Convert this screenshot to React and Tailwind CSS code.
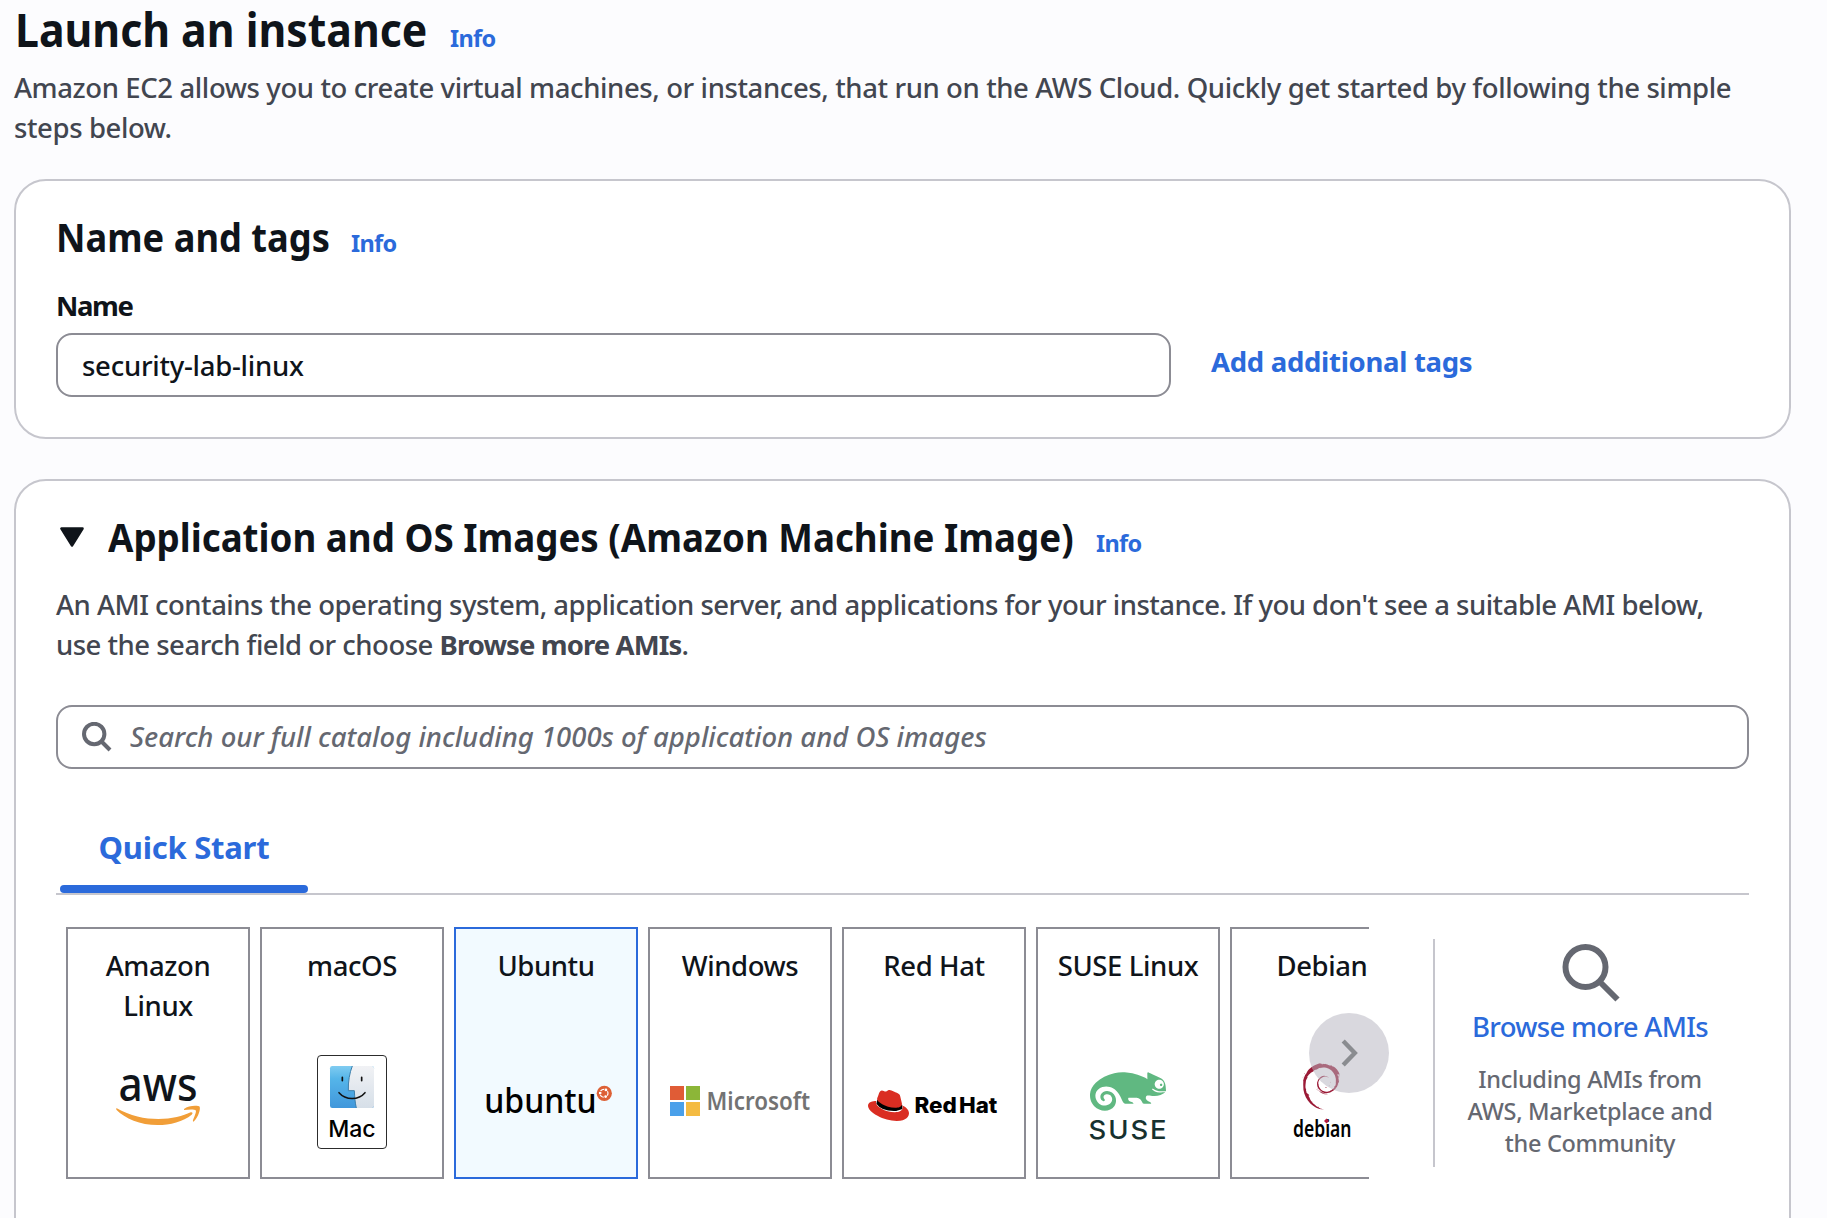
import { SiDebian, SiRedhat, SiSuse } from "react-icons/si";
import { FaUbuntu } from "react-icons/fa6";

const NOTO = "Noto Sans, sans-serif";

function Info() {
  return (
    <a className="text-[23.5px] font-bold tracking-[-0.7px] text-[#2b6adb]">Info</a>
  );
}

function AwsLogo() {
  return (
    <svg viewBox="68 1040 180 120" className="h-[120px] w-[180px]">
      <text x="118.5" y="1101" fontFamily={NOTO} fontWeight="500" fontSize="47.5" fill="#0f141a" textLength="79" lengthAdjust="spacingAndGlyphs">aws</text>
      <g transform="translate(50 900) scale(0.33333)" fill="#f19e38">
        <path d="M199 624C240 648 285 657 325 657C365 657 400 648 422 637C427 635 430 640 425 644C400 665 360 675 323 675C270 675 225 655 199 629Z" />
        <path d="M402 627C415 615 446 616 449 620C452 628 445 650 432 664C428 667 428 662 430 658C434 648 440 635 437 631C434 627 415 628 402 630Z" />
      </g>
    </svg>
  );
}

function MacLogo() {
  return (
    <svg viewBox="262 1040 180 120" className="h-[120px] w-[180px]">
      <defs>
        <linearGradient id="finderBlue" x1="0" y1="0" x2="0" y2="1">
          <stop offset="0" stopColor="#80ccf1" />
          <stop offset="0.3" stopColor="#55b5e9" />
          <stop offset="1" stopColor="#4197db" />
        </linearGradient>
        <linearGradient id="finderWhite" x1="0" y1="0" x2="0" y2="1">
          <stop offset="0" stopColor="#f1f2f5" />
          <stop offset="1" stopColor="#d6dfe8" />
        </linearGradient>
      </defs>
      <rect x="317.5" y="1055.5" width="69" height="93" rx="3.5" fill="#fff" stroke="#2c2c2c" strokeWidth="1" />
      <g transform="translate(300 1040) scale(0.33333)">
        <rect x="90" y="78" width="132" height="126" rx="7" fill="url(#finderBlue)" />
        <path d="M157 78H215Q222 78 222 85V197Q222 204 215 204H169C165 188 164 170 163 152H145C144 125 149 98 157 78Z" fill="url(#finderWhite)" />
        <path d="M157 78C149 98 144 125 145 152H163C164 170 165 188 169 204" fill="none" stroke="#3a7dab" strokeWidth="3" />
        <path d="M127 112V122M185 112V122" stroke="#111" strokeWidth="5" strokeLinecap="round" />
        <path d="M117 158C137 181 176 181 195 158" fill="none" stroke="#111" strokeWidth="4.5" strokeLinecap="round" />
      </g>
      <text x="328.2" y="1137.2" fontFamily="Inter, sans-serif" fontWeight="500" fontSize="22.8" fill="#000" textLength="47.5" lengthAdjust="spacingAndGlyphs">Mac</text>
    </svg>
  );
}

function UbuntuLogo() {
  return (
    <svg viewBox="456 1040 180 120" className="h-[120px] w-[180px]">
      <text x="484.2" y="1113" fontFamily={NOTO} fontWeight="500" fontSize="34.5" fill="#000" textLength="112.5" lengthAdjust="spacingAndGlyphs">ubuntu</text>
      <circle cx="604.3" cy="1093.3" r="7.6" fill="#dd6035" />
      <FaUbuntu x="598.7" y="1088" size={10.6} color="#fff" />
    </svg>
  );
}

function MicrosoftLogo() {
  return (
    <svg viewBox="650 1040 180 120" className="h-[120px] w-[180px]">
      <rect x="670" y="1086" width="14" height="14" fill="#e05c36" />
      <rect x="686" y="1086" width="14" height="14" fill="#8cb638" />
      <rect x="670" y="1102" width="14" height="14" fill="#4aa0ea" />
      <rect x="686" y="1102" width="14" height="14" fill="#f4bb42" />
      <text x="706.6" y="1109.8" fontFamily={NOTO} fontWeight="600" fontSize="24.3" fill="#737373" textLength="103.5" lengthAdjust="spacingAndGlyphs">Microsoft</text>
    </svg>
  );
}

function RedHatLogo() {
  return (
    <svg viewBox="844 1040 180 120" className="h-[120px] w-[180px]">
      <path transform="translate(868 1085) scale(1.7083)" d="M5.4 8.6L4.9 11Q8 15.6 16.5 15.2L20.2 14L20 11.6L12 11Z" fill="#000" />
      <SiRedhat x="868" y="1085" size={41} color="#da2d22" />
      <g fontFamily="Inter, sans-serif" fontWeight="800" fontSize="21.6" fill="#000">
        <text x="914.4" y="1112.6" textLength="42.4" lengthAdjust="spacingAndGlyphs">Red</text>
        <text x="959" y="1112.6" textLength="38.4" lengthAdjust="spacingAndGlyphs">Hat</text>
      </g>
    </svg>
  );
}

function SuseLogo() {
  return (
    <svg viewBox="1038 1040 180 120" className="h-[120px] w-[180px]">
      <SiSuse x="1090" y="1053.5" size={76} color="#60b881" />
      <text x="1088.5" y="1138.5" fontFamily="Inter, sans-serif" fontWeight="500" fontSize="25.5" letterSpacing="1.8" fill="#17312f" textLength="80" lengthAdjust="spacingAndGlyphs">SUSE</text>
    </svg>
  );
}

function DebianLogo() {
  return (
    <svg viewBox="1232 1040 180 120" className="h-[120px] w-[180px]">
      <SiDebian x="1298.3" y="1063" size={46.5} color="#9b1a36" />
      <text x="1293" y="1137" fontFamily={NOTO} fontWeight="600" fontSize="23" fill="#000" textLength="58.5" lengthAdjust="spacingAndGlyphs">debian</text>
      <path d="M1326.5 1118.4L1329 1120.9L1326.5 1123.4L1324 1120.9Z" fill="#b3193c" />
    </svg>
  );
}

const TILES = [
  { label: "Amazon Linux", Logo: AwsLogo },
  { label: "macOS", Logo: MacLogo },
  { label: "Ubuntu", Logo: UbuntuLogo, selected: true },
  { label: "Windows", Logo: MicrosoftLogo },
  { label: "Red Hat", Logo: RedHatLogo },
  { label: "SUSE Linux", Logo: SuseLogo },
  { label: "Debian", Logo: DebianLogo },
];

function Tile({ label, Logo, selected }) {
  return (
    <div
      className={
        "flex h-[252px] w-[184px] shrink-0 flex-col items-center border-2 pt-[17px] " +
        (selected ? "border-[#2b6adb] bg-[#f2faff]" : "border-[#8c8c94] bg-white")
      }
    >
      <div className="h-20 w-[150px] text-center text-[27.5px] leading-10 tracking-[-0.4px]">{label}</div>
      <div className="mt-[14px]">
        <Logo />
      </div>
    </div>
  );
}

export default function App() {
  return (
    <div className="flex h-[1218px] w-[1827px] flex-col overflow-hidden bg-[#fcfcfe] pr-9 pl-[14px] font-['Noto_Sans',sans-serif] font-medium text-[#0f141a]">
      <header className="flex h-[58px] shrink-0 items-baseline leading-[58px]">
        <h1 className="ml-px w-[435px] text-[47px] font-bold whitespace-nowrap">
          <span className="inline-block origin-left scale-x-[0.91]">Launch an instance</span>
        </h1>
        <Info />
      </header>
      <p className="mt-[10px] text-[27.5px] leading-10 tracking-[-0.39px] whitespace-nowrap text-[#424650]">
        Amazon EC2 allows you to create virtual machines, or instances, that run on the AWS Cloud. Quickly get started by following the simple
        <br />
        steps below.
      </p>

      <section className="mt-[31px] h-[260px] shrink-0 rounded-[32px] border-2 border-[#c6c6cd] bg-white px-10 pt-8">
        <div className="flex h-12 items-baseline leading-[48px]">
          <h2 className="w-[295px] text-[39px] font-bold whitespace-nowrap">
            <span className="inline-block origin-left scale-x-[0.93]">Name and tags</span>
          </h2>
          <Info />
        </div>
        <label className="mt-[25px] block h-[39px] text-[27.5px] leading-10 font-bold tracking-[-1.4px]">Name</label>
        <div className="mt-2 flex items-start">
          <div className="h-16 w-[1115px] rounded-2xl border-2 border-[#8c8c94] pl-6 text-[27.5px] leading-[62px] tracking-[-0.25px]">
            security-lab-linux
          </div>
          <a className="ml-10 text-[27.5px] leading-[58px] font-bold tracking-[-0.3px] text-[#2b6adb]">Add additional tags</a>
        </div>
      </section>

      <section className="mt-10 h-[900px] shrink-0 rounded-[32px] border-2 border-[#c6c6cd] bg-white px-10 pt-8">
        <div className="flex h-12 items-baseline leading-[48px]">
          <svg viewBox="0 0 26 20" className="ml-[3px] h-5 w-[26px] -translate-y-[5px]">
            <path d="M2.4 1.5H23.6L13 18.5Z" fill="#0f141a" stroke="#0f141a" strokeWidth="2.4" strokeLinejoin="round" />
          </svg>
          <h2 className="ml-[23px] w-[988px] text-[39px] font-bold whitespace-nowrap">
            <span className="inline-block origin-left scale-x-[0.941]">Application and OS Images (Amazon Machine Image)</span>
          </h2>
          <Info />
        </div>
        <p className="mt-6 text-[27.5px] leading-10 tracking-[-0.5px] whitespace-nowrap text-[#424650]">
          An AMI contains the operating system, application server, and applications for your instance. If you don't see a suitable AMI below,
          <br />
          use the search field or choose <b className="tracking-[-0.9px]">Browse more AMIs</b>.
        </p>
        <div className="mt-10 flex h-16 items-center rounded-2xl border-2 border-[#8c8c94] pl-6">
          <svg viewBox="0 0 30 30" className="h-[30px] w-[30px]">
            <circle cx="12.2" cy="12" r="10.2" fill="none" stroke="#656871" strokeWidth="4" />
            <path d="M19.5 19.5L28 28" stroke="#656871" strokeWidth="4" />
          </svg>
          <span className="ml-[18px] text-[27.5px] leading-[60px] whitespace-nowrap text-[#656871] italic">
            Search our full catalog including 1000s of application and OS images
          </span>
        </div>
        <div className="mt-[58px] border-b-2 border-[#c6c6cd]">
          <div className="ml-1 w-[248px]">
            <div className="pl-[38.5px] text-[31px] leading-10 font-bold tracking-[-0.25px] text-[#2b6adb]">Quick Start</div>
            <div className="mt-[18px] h-2 rounded-[4px] bg-[#2b6adb]" />
          </div>
        </div>
        <div className="mt-8 flex">
          <div className="relative w-[1313px] shrink-0">
            <div className="flex gap-[10px] overflow-hidden pl-[10px]">
              {TILES.map((t) => (
                <Tile key={t.label} {...t} />
              ))}
            </div>
            <button className="absolute top-[86px] -right-5 h-20 w-20 rounded-full bg-[#b6b5bf]/52">
              <svg viewBox="0 0 80 80" className="h-20 w-20">
                <path d="M34.2 28L45.8 40L34.2 52" fill="none" stroke="#8a8c90" strokeWidth="4.4" />
              </svg>
            </button>
          </div>
          <div className="mt-3 ml-16 flex h-[228px] grow flex-col items-center border-l-2 border-[#c6c6cd] pt-1 pr-1">
            <svg viewBox="0 0 60 60" className="h-[60px] w-[60px]">
              <circle cx="25.5" cy="24" r="20" fill="none" stroke="#656871" strokeWidth="6" />
              <path d="M39.5 38.5L57.5 56.5" stroke="#656871" strokeWidth="6" />
            </svg>
            <a className="mt-1 text-[27.5px] leading-10 tracking-[-0.7px] text-[#2b6adb]">Browse more AMIs</a>
            <p className="mt-4 text-center text-[23.5px] leading-8 tracking-[-0.3px] whitespace-nowrap text-[#656871]">
              Including AMIs from
              <br />
              AWS, Marketplace and
              <br />
              the Community
            </p>
          </div>
        </div>
      </section>
    </div>
  );
}
